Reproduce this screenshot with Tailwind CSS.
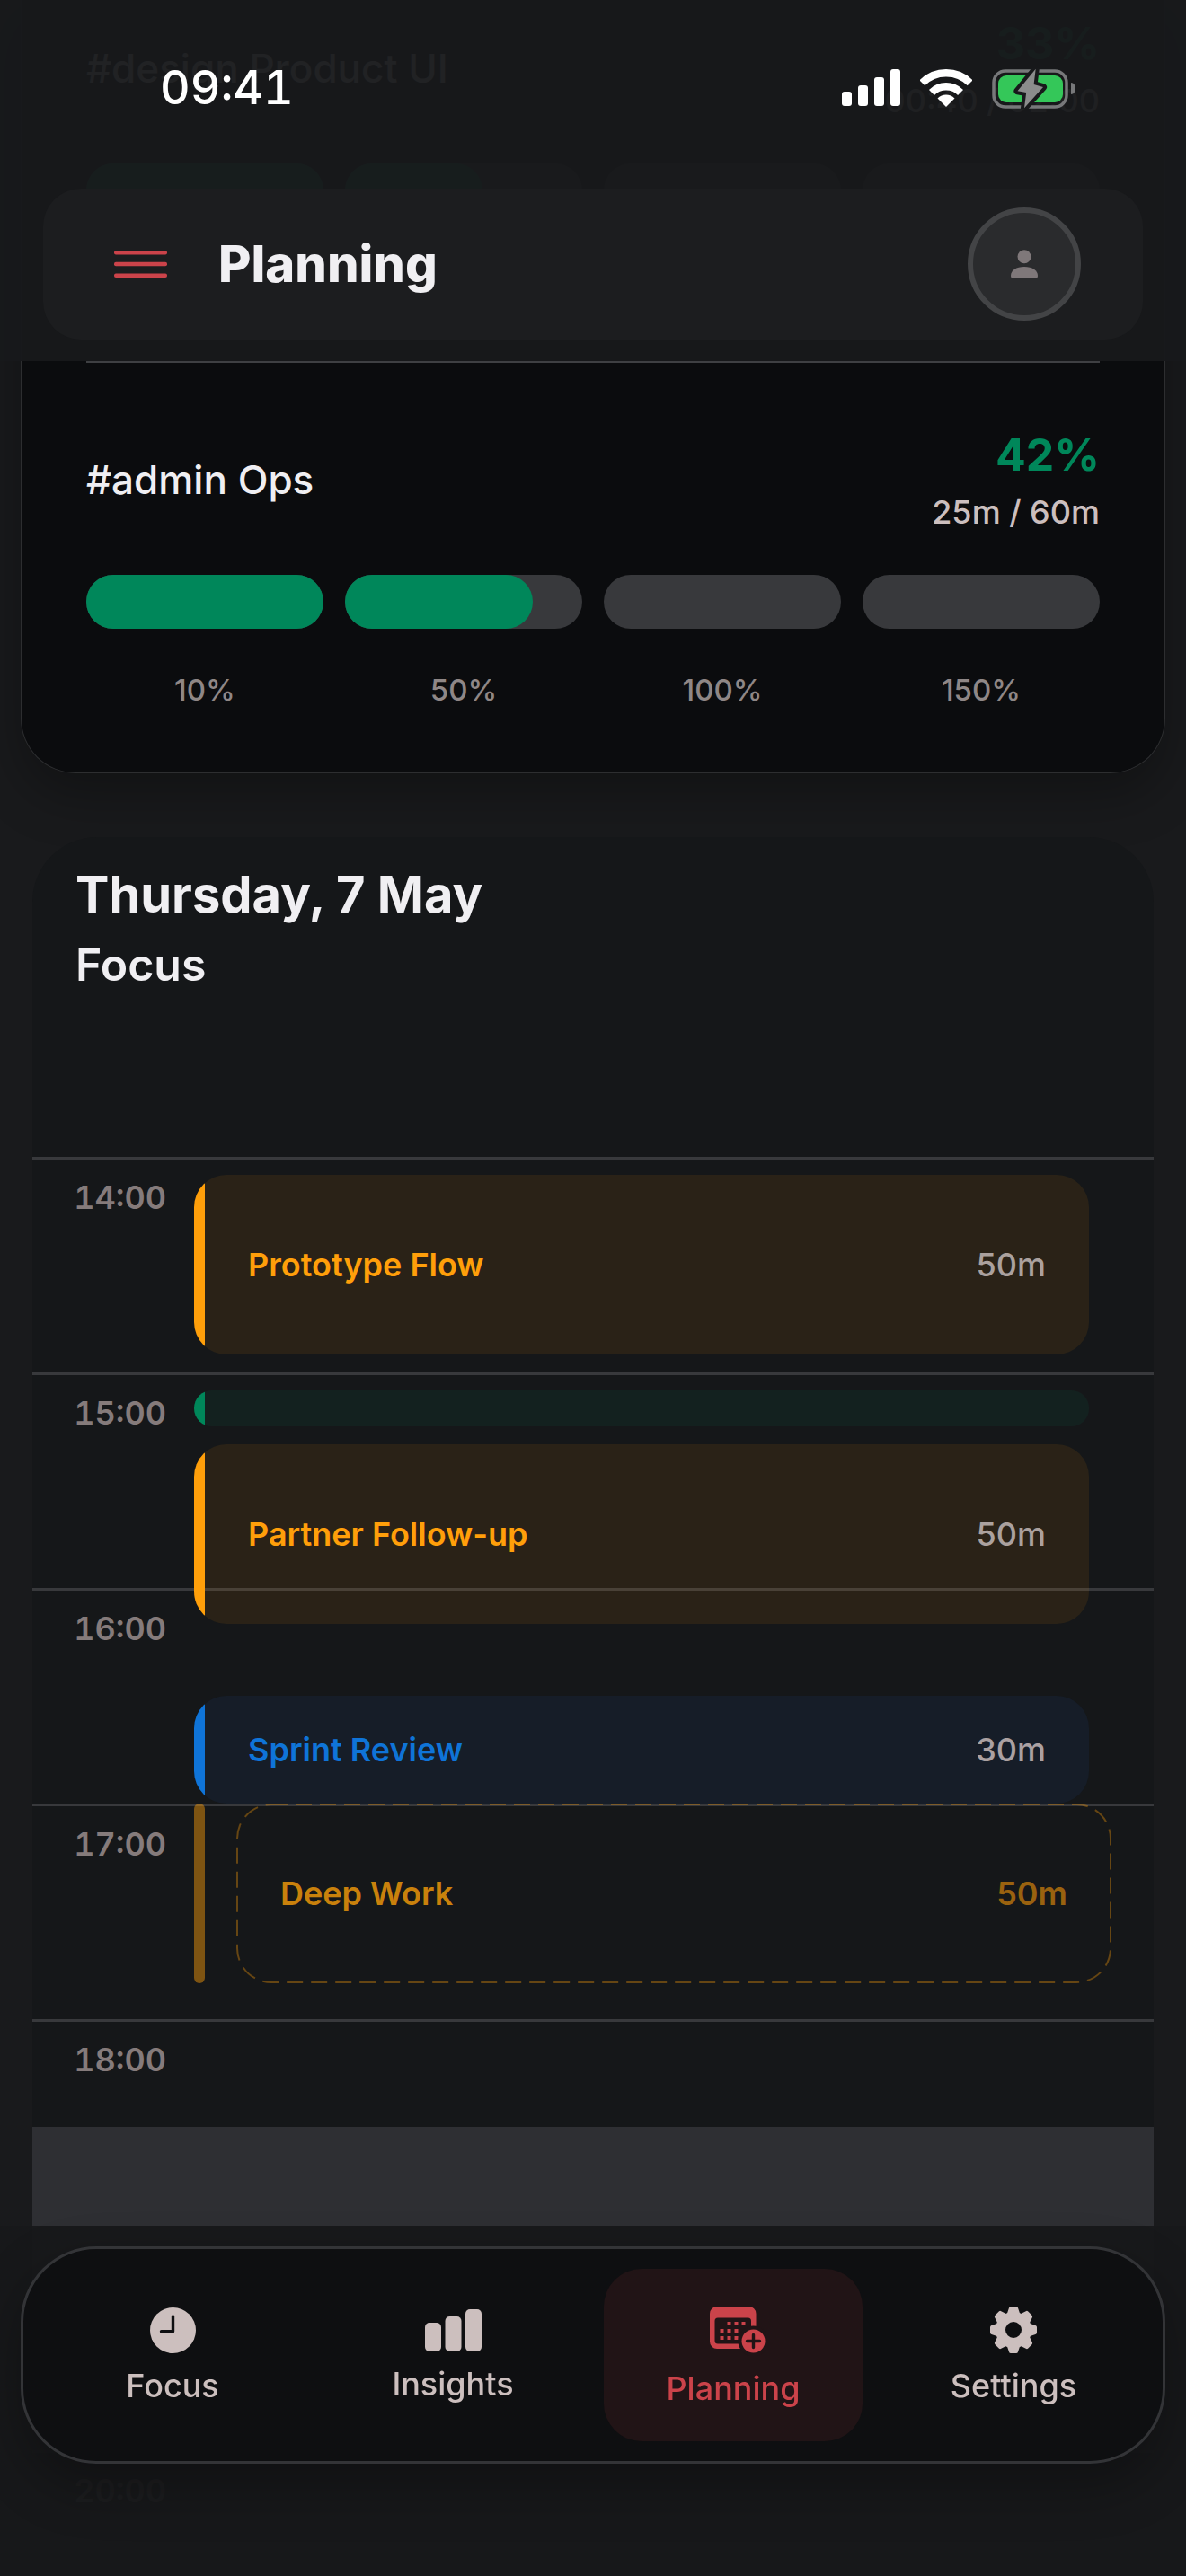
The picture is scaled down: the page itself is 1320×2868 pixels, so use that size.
<!DOCTYPE html>
<html lang="en">
  <head>
    <meta charset="UTF-8" />
    <meta name="viewport" content="width=device-width, initial-scale=1.0" />
    <title>Planning</title>
    <script src="https://cdn.jsdelivr.net/npm/@tailwindcss/browser@4"></script>
  </head>
  <body class="bg-[#191a1c] text-[#f0eff2] font-['Inter','Liberation_Sans',sans-serif] overflow-x-hidden">

    <!-- header-start -->
    <header class="fixed top-0 inset-x-0 z-20 bg-[#18191b]/96 pb-6">
      <div class="flex justify-between items-center h-[210px] pb-[14px] pl-[178px] pr-[122px]">
        <span class="text-white text-[52px] leading-[60px] font-medium tabular-nums">09:41</span>
        <div class="flex items-center gap-[22px]">
          <!-- signal -->
          <svg class="w-[65px] h-[42px]" viewBox="0 0 65 42" fill="#fff">
            <rect x="0" y="25" width="11" height="16" rx="3" />
            <rect x="18" y="18" width="11" height="23" rx="3" />
            <rect x="36" y="9" width="11" height="32" rx="3" />
            <rect x="54" y="0" width="11" height="41" rx="3" />
          </svg>
          <!-- wifi -->
          <svg class="w-[58px] h-[42px]" viewBox="0 0 58 42" fill="none" stroke="#fff" stroke-width="8.4">
            <path d="M2.3 15.3A37.8 37.8 0 0 1 55.7 15.3" />
            <path d="M12.95 25.95A22.7 22.7 0 0 1 45.05 25.95" />
            <path d="M29 42L19.5 32.5A13.5 13.5 0 0 1 38.5 32.5Z" fill="#fff" stroke="none" />
          </svg>
          <!-- battery -->
          <svg class="w-[94px] h-[45px]" viewBox="0 0 94 45">
            <rect x="2" y="3" width="81" height="40" rx="13" fill="none" stroke="#77787a" stroke-width="3.5" />
            <rect x="7" y="8" width="72" height="30" rx="9" fill="#34c759" />
            <path d="M88 16C91 16 93 19 93 22.500S91 29 88 29Z" fill="#77787a" />
            <path d="M48.700 .700L28.500 25.300L38.200 27L36 44.300L57 21L46.600 18Z" fill="#8b8c8c" stroke="#18191b" stroke-width="8" stroke-linejoin="round" paint-order="stroke" />
          </svg>
        </div>
      </div>

      <div class="flex items-center h-[168px] mx-12 pl-[79px] pr-[69px] rounded-[42px] bg-[#1c1d1f]">
        <button type="button" aria-label="Menu" class="flex items-center">
          <svg class="w-[60px] h-[30px]" viewBox="0 0 60 30" fill="#cb434a">
            <rect y="0" width="59" height="4.600" rx="2" />
            <rect y="12.700" width="59" height="4.600" rx="2" />
            <rect y="25.400" width="59" height="4.600" rx="2" />
          </svg>
        </button>
        <h1 class="ml-14 text-[56px] leading-[72px] font-extrabold">Planning</h1>
        <button type="button" aria-label="Account" class="ml-auto size-[126px] rounded-full border-[6px] border-[#434446] bg-[#2a2b2d] flex justify-center items-center">
          <svg class="w-[30px] h-[32px]" viewBox="0 0 30 32" fill="#7f787a">
            <circle cx="15" cy="7.800" r="7.500" />
            <path d="M0 29C0 23 6 19 15 19S30 23 30 29C30 31 29 32 27.500 32H2.500C1 32 0 31 0 29Z" />
          </svg>
        </button>
      </div>
    </header>
    <!-- header-end -->

    <main class="min-h-screen">

      <!-- goals -->
      <section class="mx-6 px-[72px] pt-[18px] rounded-b-[60px] bg-[#0b0c0e] ring-1 ring-[#2d2e30] shadow-[0_24px_60px_rgba(0,0,0,0.3)]">
        <article class="pb-[72px] border-b-2 border-[#3f4043]">
          <div class="flex justify-between items-center">
            <h2 class="text-[44px] leading-[60px] font-medium">#design Product UI</h2>
            <div class="flex flex-col gap-3 text-right">
              <span class="text-[50px] leading-[60px] font-bold text-[#00875a]">33%</span>
              <span class="text-[36px] leading-[44px] font-medium text-[#ccbfbe]">00:40 / 02:00</span>
            </div>
          </div>
          <div class="grid grid-cols-4 gap-6 mt-12">
            <div class="h-[60px] rounded-full bg-[#38393c]"><div class="h-full rounded-full bg-[#00875a]" style="width: 100%"></div></div>
            <div class="h-[60px] rounded-full bg-[#38393c]"><div class="h-full rounded-full bg-[#00875a]" style="width: 58%"></div></div>
            <div class="h-[60px] rounded-full bg-[#38393c]"></div>
            <div class="h-[60px] rounded-full bg-[#38393c]"></div>
          </div>
          <div class="grid grid-cols-4 gap-6 mt-12 text-center text-[33px] leading-[40px] font-medium text-[#8f8786]">
            <span>10%</span>
            <span>50%</span>
            <span>100%</span>
            <span>150%</span>
          </div>
        </article>

        <article class="py-[72px]">
          <div class="flex justify-between items-center">
            <h2 class="text-[44px] leading-[60px] font-medium">#admin Ops</h2>
            <div class="flex flex-col gap-3 text-right">
              <span class="text-[50px] leading-[60px] font-bold text-[#00875a]">42%</span>
              <span class="text-[36px] leading-[44px] font-medium text-[#ccbfbe]">25m / 60m</span>
            </div>
          </div>
          <div class="grid grid-cols-4 gap-6 mt-12">
            <div class="h-[60px] rounded-full bg-[#38393c]"><div class="h-full rounded-full bg-[#00875a]" style="width: 100%"></div></div>
            <div class="h-[60px] rounded-full bg-[#38393c]"><div class="h-full rounded-full bg-[#00875a]" style="width: 79%"></div></div>
            <div class="h-[60px] rounded-full bg-[#38393c]"></div>
            <div class="h-[60px] rounded-full bg-[#38393c]"></div>
          </div>
          <div class="grid grid-cols-4 gap-6 mt-12 text-center text-[33px] leading-[40px] font-medium text-[#8f8786]">
            <span>10%</span>
            <span>50%</span>
            <span>100%</span>
            <span>150%</span>
          </div>
        </article>
      </section>

      <!-- day -->
      <section class="mx-9 mt-[72px] rounded-t-[72px] bg-[#151719]">
        <div class="px-12 pt-7 pb-[184px]">
          <h2 class="text-[56px] leading-[72px] font-bold">Thursday, 7 May</h2>
          <p class="mt-3 text-[50px] leading-[60px] font-semibold">Focus</p>
        </div>

        <!-- timeline, one grid row = 5 minutes -->
        <div class="grid grid-cols-[180px_1fr] auto-rows-[20px]">
          <div class="col-span-full row-[1/span_12] border-t-3 border-[#38393c] pt-5"><span class="block w-[149px] text-right text-[36px] leading-[44px] font-semibold tabular-nums text-[#857b7b]">14:00</span></div>
          <div class="col-span-full row-[13/span_12] border-t-3 border-[#38393c] pt-5"><span class="block w-[149px] text-right text-[36px] leading-[44px] font-semibold tabular-nums text-[#857b7b]">15:00</span></div>
          <div class="col-span-full row-[25/span_12] border-t-3 border-[#38393c] pt-5"><span class="block w-[149px] text-right text-[36px] leading-[44px] font-semibold tabular-nums text-[#857b7b]">16:00</span></div>
          <div class="col-span-full row-[37/span_12] border-t-3 border-[#38393c] pt-5"><span class="block w-[149px] text-right text-[36px] leading-[44px] font-semibold tabular-nums text-[#857b7b]">17:00</span></div>
          <div class="col-span-full row-[49/span_12] border-t-3 border-[#38393c] pt-5"><span class="block w-[149px] text-right text-[36px] leading-[44px] font-semibold tabular-nums text-[#857b7b]">18:00</span></div>
          <div class="col-span-full row-[73/span_7] border-t-3 border-[#38393c] pt-5"><span class="block w-[149px] text-right text-[36px] leading-[44px] font-semibold tabular-nums text-[#857b7b]">20:00</span></div>

          <!-- off hours -->
          <div class="col-span-full row-[55/span_12] bg-[#2e2f33]"></div>

          <div class="col-start-2 row-[2/span_10] mr-[72px] flex rounded-[36px] overflow-hidden bg-[#ff9f0a]/9">
            <div class="w-3 bg-[#ff9f0a]"></div>
            <div class="flex-1 flex justify-between items-center px-12 text-[36px] leading-[44px]">
              <span class="font-semibold text-[#ff9f0a]">Prototype Flow</span>
              <span class="font-medium text-[#aba19e]">50m</span>
            </div>
          </div>

          <div class="col-start-2 row-[14/span_2] mr-[72px] flex rounded-full overflow-hidden bg-[#00875a]/9">
            <div class="w-3 bg-[#00875a]"></div>
          </div>

          <div class="col-start-2 row-[17/span_10] mr-[72px] flex rounded-[36px] overflow-hidden bg-[#ff9f0a]/9">
            <div class="w-3 bg-[#ff9f0a]"></div>
            <div class="flex-1 flex justify-between items-center px-12 text-[36px] leading-[44px]">
              <span class="font-semibold text-[#ff9f0a]">Partner Follow-up</span>
              <span class="font-medium text-[#aba19e]">50m</span>
            </div>
          </div>

          <div class="col-start-2 row-[31/span_6] mr-[72px] flex rounded-[36px] overflow-hidden bg-[#161d28]">
            <div class="w-3 bg-[#0f74d8]"></div>
            <div class="flex-1 flex justify-between items-center px-12 text-[36px] leading-[44px]">
              <span class="font-semibold text-[#0f74d8]">Sprint Review</span>
              <span class="font-medium text-[#aba1a2]">30m</span>
            </div>
          </div>

          <!-- suggested block -->
          <div class="col-start-2 row-[37/span_10] mr-12 flex gap-9">
            <div class="w-3 rounded-full bg-[#ff9f0a]/45"></div>
            <div class="relative flex-1 flex justify-between items-center px-12 text-[36px] leading-[44px] font-semibold">
              <svg class="absolute inset-0 size-full overflow-visible">
                <rect x="0" y="1" width="100%" height="198" rx="38" fill="none" stroke="#ff9f0a" stroke-opacity="0.35" stroke-width="2" stroke-dasharray="18 9" />
              </svg>
              <span class="text-[#c9810c]">Deep Work</span>
              <span class="text-[#9a620f]">50m</span>
            </div>
          </div>
        </div>
      </section>
    </main>

    <!-- tab bar -->
    <footer class="fixed bottom-0 inset-x-0 z-20 bg-[#18191b]/97 pt-[23px] pb-[125px] px-[23px]">
      <nav class="grid grid-cols-4 gap-6 p-[22px] rounded-[84px] border-3 border-[#333437] bg-[#0e0f11] text-[36px] leading-[40px] font-medium text-[#ccbfbe] shadow-[0_24px_60px_rgba(0,0,0,0.3)]">
        <a href="#focus" class="h-[192px] flex flex-col justify-center items-center gap-4">
          <svg class="w-[51px] h-[51px]" viewBox="0 0 51 51">
            <circle cx="25.500" cy="25.500" r="25.500" fill="#ccbfbe" />
            <path d="M25.500 10V26.800H12.500" fill="none" stroke="#0e0f11" stroke-width="3.400" stroke-linecap="round" stroke-linejoin="round" />
          </svg>
          Focus
        </a>
        <a href="#insights" class="h-[192px] flex flex-col justify-center items-center gap-4">
          <svg class="w-[63px] h-[47px]" viewBox="0 0 63 47" fill="#ccbfbe">
            <rect x="0" y="15" width="18" height="32" rx="5" />
            <rect x="22.500" y="8" width="18" height="39" rx="5" />
            <rect x="45" y="0" width="18" height="47" rx="5" />
          </svg>
          Insights
        </a>
        <a href="#planning" aria-current="page" class="h-[192px] rounded-[42px] bg-[#211416] text-[#cb434a] flex flex-col justify-center items-center gap-4">
          <svg class="w-[62px] h-[58px] ml-[10px]" viewBox="0 -3 62 58" fill="#cb434a">
            <path fill-rule="evenodd" d="M8 0H43.500A8 8 0 0 1 51.500 8V39A8 8 0 0 1 43.500 47H8A8 8 0 0 1 0 39V8A8 8 0 0 1 8 0ZM9 12.500A3.500 3.500 0 0 0 5.500 16V38A3.500 3.500 0 0 0 9 41.500H42.500A3.500 3.500 0 0 0 46 38V16A3.500 3.500 0 0 0 42.500 12.500Z" />
            <path d="M19.500 17h4v4h-4zM27.500 17h4v4h-4zM35.500 17h4v4h-4zM11.500 25h4v4h-4zM19.500 25h4v4h-4zM27.500 25h4v4h-4zM11.500 33h4v4h-4zM19.500 33h4v4h-4zM27.500 33h4v4h-4z" />
            <circle cx="48.500" cy="38.500" r="17" fill="#211416" />
            <circle cx="48.500" cy="38.500" r="13" />
            <path d="M48.500 31.500V45.500M41.500 38.500H55.500" stroke="#211416" stroke-width="3.400" stroke-linecap="round" />
          </svg>
          Planning
        </a>
        <a href="#settings" class="h-[192px] flex flex-col justify-center items-center gap-4">
          <svg class="w-[52px] h-[52px]" viewBox="-26 -26 52 52" fill="#ccbfbe">
            <defs>
              <path id="tooth" d="M-7.500 -17L-5 -24.500Q-4.600 -26 -3 -26H3Q4.600 -26 5 -24.500L7.500 -17Z" />
            </defs>
            <circle r="14.500" fill="none" stroke="#ccbfbe" stroke-width="11" />
            <use href="#tooth" />
            <use href="#tooth" transform="rotate(45)" />
            <use href="#tooth" transform="rotate(90)" />
            <use href="#tooth" transform="rotate(135)" />
            <use href="#tooth" transform="rotate(180)" />
            <use href="#tooth" transform="rotate(225)" />
            <use href="#tooth" transform="rotate(270)" />
            <use href="#tooth" transform="rotate(315)" />
          </svg>
          Settings
        </a>
      </nav>
    </footer>

  </body>
</html>
